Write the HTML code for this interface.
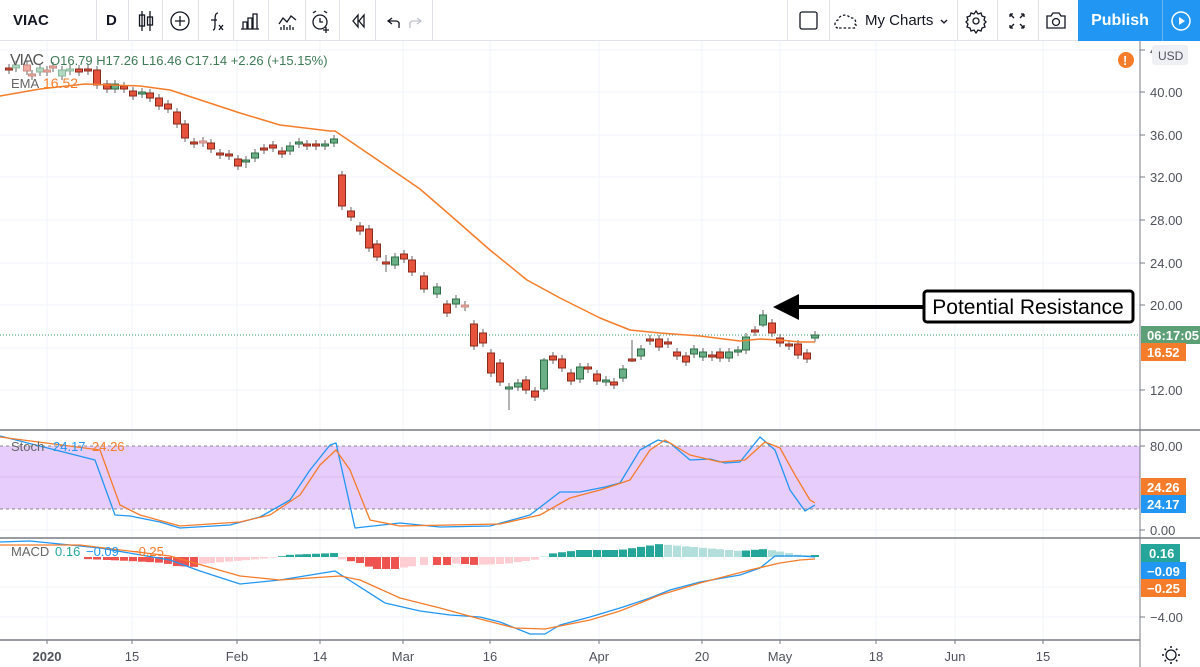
<!DOCTYPE html>
<html><head><meta charset="utf-8">
<style>
body{margin:0;width:1200px;height:667px;overflow:hidden;background:#fff;font-family:"Liberation Sans",sans-serif;}
#tb{position:absolute;left:0;top:0;width:1200px;height:41px;border-bottom:1px solid #e0e3eb;box-sizing:border-box;}
.sep{position:absolute;top:0;width:1px;height:40px;background:#e0e3eb;}
.t{position:absolute;font-size:15px;color:#131722;}
svg{position:absolute;left:0;top:0}
</style></head><body>
<div id="tb">
<div class="t" style="left:13px;top:12px;font-weight:bold;font-size:15px">VIAC</div>
<div class="t" style="left:106px;top:12px;font-weight:bold">D</div>
<div class="sep" style="left:96px"></div><div class="sep" style="left:128px"></div><div class="sep" style="left:162px"></div>
<div class="sep" style="left:198px"></div><div class="sep" style="left:233px"></div><div class="sep" style="left:268px"></div>
<div class="sep" style="left:305px"></div><div class="sep" style="left:339px"></div><div class="sep" style="left:375px"></div><div class="sep" style="left:432px"></div>
<div class="sep" style="left:787px"></div><div class="sep" style="left:829px"></div><div class="sep" style="left:957px"></div><div class="sep" style="left:997px"></div><div class="sep" style="left:1038px"></div>
<div class="t" style="left:865px;top:12px;font-size:15px">My Charts</div>
<div style="position:absolute;left:1078px;top:0;width:84px;height:41px;background:#2196f3;color:#fff;font-size:16px;font-weight:bold;text-align:center;line-height:41px">Publish</div>
<div style="position:absolute;left:1162px;top:0;width:38px;height:41px;background:#2196f3;border-left:1px solid #6bb6f5;box-sizing:border-box"></div>
</div>
<svg width="1200" height="667" id="s" style="pointer-events:none">
<g fill="none" stroke="#131722" stroke-width="1.3">
<path d="M142 11v20M150 11v20"/><rect x="139.5" y="15" width="5" height="11"/><rect x="147.5" y="17" width="5" height="8"/>
<circle cx="180" cy="21" r="9"/><path d="M180 16v10M175 21h10"/>
<path d="M213 30c2 0 2-3 2-8s0-9 3-9M211 20h6"/><path d="M219 25l4 5M223 25l-4 5"/>
<path d="M243 29V22h4v7M248 29V18h4v11M253 29V14h4v15M241 29h18"/>
<path d="M279 24l4-6 4 4 4-6 5 4M281 30v-3M284 30v-5M287 30v-3M290 30v-5M293 30v-3"/>
<circle cx="320" cy="22" r="7"/><path d="M320 18v4h3M313 13l3-2M327 13l-3-2M326 27v6M323 30h6"/>
<path d="M358 15l-5 6 5 6zM364 15l-5 6 5 6z"/>
<path d="M392 18l-4 3 4 3M388 21h8a3 3 0 0 1 3 4v3"/>
<path stroke="#c0c3cb" d="M417 18l4 3-4 3M421 21h-8a3 3 0 0 0-3 4v3"/>
<rect x="800" y="12" width="17" height="17" rx="2"/>
<path stroke-dasharray="2.5 2" d="M838 28c-4 0-4-7 0-8 1-5 9-7 12-2 4-1 7 3 5 6 2 1 1 4-1 4z"/>
<path d="M941 20l3 3 3-3"/>
<circle cx="976" cy="21" r="3"/><path d="M976 11l2 3 3-1 1 3 3 1-1 3 2 2-2 2 1 3-3 1-1 3-3-1-2 3-2-3-3 1-1-3-3-1 1-3-2-2 2-2-1-3 3-1 1-3 3 1z"/>
<path d="M1010 14l4 4M1010 14v3M1010 14h3M1024 14l-4 4M1024 14v3M1024 14h-3M1010 28l4-4M1010 28v-3M1010 28h3M1024 28l-4-4M1024 28v-3M1024 28h-3"/>
<path d="M1047 16h4l2-3h6l2 3h4v12h-18z"/><circle cx="1056" cy="22" r="3.5"/>
</g>
<circle cx="1181" cy="21" r="9" fill="none" stroke="#fff" stroke-width="1.5"/><path d="M1179 17v8l6-4z" fill="#fff"/>
</svg>
<script>
const S=document.getElementById('s');const NS='http://www.w3.org/2000/svg';
function el(t,a,txt){const e=document.createElementNS(NS,t);for(const k in a)e.setAttribute(k,a[k]);if(txt!==undefined)e.textContent=txt;S.appendChild(e);return e;}
const vx=[47,132,237,320,403,490,599,702,780,876,955,1043];
vx.forEach(x=>el('line',{x1:x,y1:41,x2:x,y2:640,stroke:'#f0f3fa'}));
[50,92,135,177,220,263,305,348,390].forEach(y=>el('line',{x1:0,y1:y,x2:1140,y2:y,stroke:'#f0f3fa'}));
[587,617].forEach(y=>el('line',{x1:0,y1:y,x2:1140,y2:y,stroke:'#f0f3fa'}));
el('rect',{x:0,y:446,width:1140,height:63,fill:'#e7cdfc'});
el('line',{x1:0,y1:477,x2:1140,y2:477,stroke:'#dcbcf0'});
el('line',{x1:0,y1:446,x2:1140,y2:446,stroke:'#888','stroke-dasharray':'3 3'});
el('line',{x1:0,y1:509,x2:1140,y2:509,stroke:'#888','stroke-dasharray':'3 3'});
el('line',{x1:0,y1:530,x2:1140,y2:530,stroke:'#f0f3fa'});
[430,538].forEach(y=>el('line',{x1:0,y1:y,x2:1200,y2:y,stroke:'#787b86','stroke-width':1.5}));
el('line',{x1:0,y1:640,x2:1140,y2:640,stroke:'#787b86','stroke-width':1.5});
el('line',{x1:1140,y1:41,x2:1140,y2:667,stroke:'#787b86','stroke-width':1});
el('line',{x1:0,y1:335,x2:1140,y2:335,stroke:'#3a9a6a','stroke-dasharray':'1 2'});
const C=[[9,68,70,'r'],[16,65,68,'lg'],[27,65,71,'p'],[32,74,76,'p'],[40,68,72,'lg'],[47,70,72,'p'],[53,66,68,'p'],[62,70,76,'lg'],[70,69,71,'lg'],[79,69,72,'r'],[88,69,71,'r'],[97,70,85,'r'],[107,84,89,'r'],[115,84,89,'g'],[124,86,89,'r'],[133,91,96,'r'],[142,92,94,'g'],[150,93,98,'r'],[159,98,106,'r'],[168,104,109,'r'],[177,112,124,'r'],[185,124,138,'r'],[194,142,144,'r'],[203,141,143,'p'],[211,143,149,'r'],[220,153,155,'r'],[229,154,156,'r'],[238,159,166,'r'],[246,160,162,'g'],[255,153,158,'g'],[264,148,150,'r'],[273,145,148,'r'],[282,151,154,'r'],[290,146,151,'g'],[299,142,144,'g'],[307,144,146,'r'],[316,144,146,'r'],[325,144,146,'g'],[334,139,143,'g'],[342,175,206,'r'],[351,211,217,'r'],[360,226,231,'r'],[369,229,248,'r'],[377,244,257,'r'],[386,262,264,'r'],[395,257,265,'g'],[404,254,259,'r'],[412,260,272,'r'],[424,276,289,'r'],[437,287,294,'g'],[447,304,313,'r'],[456,299,304,'g'],[465,305,307,'p'],[474,324,346,'r'],[483,333,343,'r'],[491,353,373,'r'],[500,363,382,'r'],[509,387,389,'g'],[518,383,387,'g'],[526,380,390,'r'],[535,391,397,'r'],[544,360,389,'g'],[553,356,360,'r'],[562,359,368,'r'],[571,373,381,'r'],[580,367,379,'g'],[588,367,369,'r'],[597,374,381,'r'],[606,380,382,'g'],[614,382,385,'r'],[623,369,378,'g'],[632,359,361,'r'],[641,349,356,'g'],[650,339,341,'r'],[659,339,347,'r'],[668,342,344,'r'],[677,352,356,'r'],[686,356,362,'r'],[694,349,354,'g'],[703,352,357,'g'],[712,355,357,'r'],[720,352,358,'r'],[729,352,358,'g'],[738,350,352,'g'],[746,337,350,'g'],[755,330,332,'r'],[763,315,325,'g'],[772,323,333,'r'],[780,338,343,'r'],[789,344,346,'r'],[798,344,355,'r'],[807,353,359,'r'],[815,335,338,'g']];
const wl={509:[383,410],632:[340,362],544:[358,392],763:[310,327],386:[255,272],246:[156,168]};
const col={r:['#e5533d','#8a2a1c'],g:['#6aae86','#2d6e46'],p:['#f0aaa0','#c98a80'],lg:['#b2d8c0','#8ab89a']};
C.forEach(c=>{const[x,t,b,k]=c;const w=wl[x]||[t-4,b+4];el('line',{x1:x,y1:w[0],x2:x,y2:w[1],stroke:'#666'});el('rect',{x:x-3.5,y:t,width:7,height:Math.max(b-t,1.5),fill:col[k][0],stroke:col[k][1],'stroke-width':1});});
function pl(pts,c,w){el('polyline',{points:pts.map(p=>p.join(',')).join(' '),fill:'none',stroke:c,'stroke-width':w||1.3,'stroke-linejoin':'round'});}
pl([[0,96],[40,89],[85,84],[140,86],[170,90],[240,113],[280,125],[330,131],[335,131],[385,165],[420,189],[450,215],[490,250],[527,280],[560,298],[600,318],[630,330],[660,333],[700,336],[740,341],[760,339],[780,340],[800,342],[815,342]],'#f57c2a',1.5);
pl([[0,436],[95,460],[115,515],[130,516],[160,522],[180,528],[230,525],[260,517],[290,500],[310,470],[330,445],[336,443],[355,528],[400,523],[440,527],[490,526],[530,515],[560,492],[580,492],[605,487],[620,483],[640,450],[658,440],[670,443],[690,460],[710,459],[725,463],[740,462],[760,437],[775,450],[790,490],[805,511],[815,505]],'#2196f3');
pl([[0,437],[100,450],[120,505],[140,515],[180,526],[240,522],[270,515],[300,495],[320,465],[336,450],[350,470],[370,520],[400,526],[450,525],[500,524],[540,515],[570,498],[600,490],[630,480],[650,450],[665,440],[690,455],[720,462],[745,460],[765,442],[780,448],[795,475],[810,500],[815,503]],'#f57c2a');
function hv(x){const P=[[0,0],[85,-2],[130,-4],[165,-6],[175,-9],[197,-10],[200,-7],[260,-2],[280,0],[285,2],[335,4],[340,-2],[360,-6],[375,-12],[395,-12],[420,-8],[447,-8],[460,-6],[470,-8],[505,-7],[540,-2],[548,3],[580,7],[620,7],[660,13],[670,12],[740,6],[765,8],[800,2],[815,2]];for(let i=1;i<P.length;i++){if(x<=P[i][0]){const a=P[i-1],b=P[i];return a[1]+(b[1]-a[1])*(x-a[0])/(b[0]-a[0]);}}return 0;}
let prev=0;C.forEach(c=>{const x=c[0];if(x<80)return;const v=hv(x);const up=Math.abs(v)>=Math.abs(prev);let f=v>=0?(up?'#26a69a':'#b2dfdb'):(up?'#ef5350':'#ffcdd2');prev=v;const y0=557;el('rect',{x:x-4,y:v>=0?y0-v:y0,width:8,height:Math.abs(v),fill:f});});
pl([[0,542],[30,541],[100,548],[170,560],[200,571],[240,584],[280,580],[335,571],[385,603],[420,611],[450,615],[480,617],[500,622],[530,634],[545,634],[560,625],[590,617],[620,608],[650,598],[670,590],[700,582],[740,575],[760,568],[775,556],[800,556],[815,557]],'#2196f3');
pl([[0,545],[80,545],[170,556],[240,576],[280,580],[340,576],[360,580],[400,598],[440,608],[480,619],[515,628],[545,629],[590,620],[620,611],[660,595],[700,583],[750,570],[780,563],[800,560],[815,559]],'#f57c2a');
const T=(x,y,s,c,o)=>{const e=el('text',Object.assign({x:x,y:y,fill:c,'font-size':13,'font-family':'Liberation Sans, sans-serif'},o||{}),s);return e;};
T(10,65,'VIAC','#555',{'font-size':16,'textLength':34});T(50,65,'O16.79  H17.26  L16.46  C17.14  +2.26 (+15.15%)','#3d7a55',{'font-size':13});
T(11,88,'EMA','#666');T(43,88,'16.52','#f57c2a',{'font-size':14});
T(11,451,'Stoch','#666');T(53,451,'24.17','#2196f3');T(92,451,'24.26','#f57c2a');
T(11,556,'MACD','#666');T(55,556,'0.16','#26a69a');T(86,556,'\u22120.09','#2196f3');T(131,556,'\u22120.25','#f57c2a');
[[50,'44.00'],[92,'40.00'],[135,'36.00'],[177,'32.00'],[220,'28.00'],[263,'24.00'],[305,'20.00'],[390,'12.00'],[446,'80.00'],[530,'0.00'],[617,'\u22124.00']].forEach(p=>{el('line',{x1:1140,y1:p[0],x2:1145,y2:p[0],stroke:'#787b86'});T(1150,p[0]+5,p[1],'#50535e');});
el('rect',{x:1152,y:45,width:36,height:20,rx:3,fill:'#eef0f4'});T(1158,60,'USD','#50535e',{'font-size':12});
el('circle',{cx:1126,cy:60,r:8,fill:'#f57c2a'});T(1123,65,'!','#fff',{'font-weight':'bold'});
function tag(y,s,c,w){el('rect',{x:1141,y:y-9,width:w||45,height:18,fill:c});T(1147,y+5,s,'#fff',{'font-weight':'bold'});}
tag(335,'06:17:05','#5d9f76',59);tag(352,'16.52','#f57c2a');tag(487,'24.26','#f57c2a');tag(504,'24.17','#2196f3');
el('rect',{x:1141,y:544,width:39,height:18,fill:'#26a69a'});T(1149,558,'0.16','#fff',{'font-weight':'bold'});
tag(571,'\u22120.09','#2196f3');tag(588,'\u22120.25','#f57c2a');
[[47,'2020',1],[132,'15'],[237,'Feb'],[320,'14'],[403,'Mar'],[490,'16'],[599,'Apr'],[702,'20'],[780,'May'],[876,'18'],[955,'Jun'],[1043,'15']].forEach(p=>{el('line',{x1:p[0],y1:640,x2:p[0],y2:644,stroke:'#787b86'});T(p[0],661,p[1],'#50535e',{'text-anchor':'middle','font-weight':p[2]?'bold':'normal'});});
el('circle',{cx:1171,cy:655,r:5,fill:'none',stroke:'#131722','stroke-width':1.3});
for(let i=0;i<8;i++){const a=i*Math.PI/4;el('line',{x1:1171+7*Math.cos(a),y1:655+7*Math.sin(a),x2:1171+9*Math.cos(a),y2:655+9*Math.sin(a),stroke:'#131722','stroke-width':1.5});}
el('line',{x1:790,y1:307,x2:925,y2:307,stroke:'#000','stroke-width':4});
el('path',{d:'M773 307L799 294L799 320Z',fill:'#000'});
el('rect',{x:924,y:291,width:209,height:31,rx:3,fill:'#fff',stroke:'#000','stroke-width':3});
T(1028,314,'Potential Resistance','#000',{'font-size':21,'text-anchor':'middle'});
</script>
</body></html>
